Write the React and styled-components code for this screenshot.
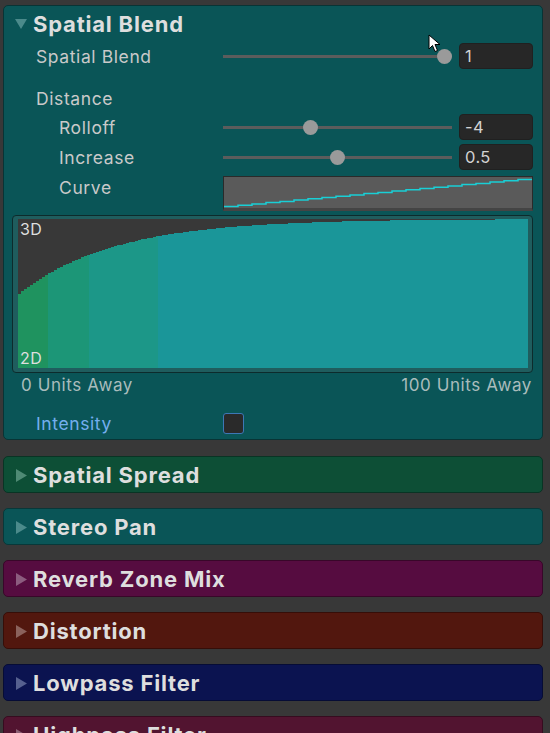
import React from "react";
import styled, { createGlobalStyle } from "styled-components";

const Global = createGlobalStyle`
  html, body { margin: 0; padding: 0; background: #383838; }
  body { font-family: Inter, "Noto Sans", "Liberation Sans", sans-serif; }
  * { box-sizing: border-box; }
`;

const Page = styled.div`
  position: relative;
  width: 550px;
  height: 733px;
  overflow: hidden;
  background: #383838;
  padding: 5px 7px 0 3px;
  display: flex;
  flex-direction: column;
  gap: 15px;
`;

const Foldout = styled.section`
  flex: none;
  background: ${(p) => p.$bg};
  border: 1px solid ${(p) => p.$border};
  border-radius: 5px;
  display: flex;
  flex-direction: column;
  margin-bottom: ${(p) => p.$mb || 0}px;
`;

const Header = styled.div`
  height: 35px;
  display: flex;
  align-items: center;
  padding-left: 11px;
  gap: 6px;
  color: #dedede;
  font-weight: 700;
  font-size: 22px;
  letter-spacing: 0.8px;
`;

const Arrow = styled.span`
  width: 12px;
  height: 13px;
  display: flex;
  align-items: center;
  justify-content: center;
  margin-top: 1px;
  svg { display: block; }
`;

const Body = styled.div`
  display: flex;
  flex-direction: column;
  padding: 1px 9px 4px 8px;
`;

const Row = styled.div`
  display: flex;
  align-items: ${(p) => (p.$top ? "flex-start" : "center")};
  height: ${(p) => p.$h || 26}px;
  margin-top: ${(p) => p.$mt || 0}px;
`;

const Label = styled.div`
  width: 211px;
  padding-left: ${(p) => p.$indent}px;
  flex: none;
  font-size: 17.5px;
  letter-spacing: 0.6px;
  color: ${(p) => (p.$blue ? "#74aeee" : "#c9c9c9")};
  line-height: ${(p) => (p.$top ? "24px" : "normal")};
`;

const SliderWrap = styled.div`
  flex: 1;
  display: flex;
  align-items: center;
  gap: 7px;
  height: 100%;
`;

const Track = styled.div`
  position: relative;
  flex: 1;
  height: 3px;
  background: #5c5c5c;
`;

const Thumb = styled.div`
  position: absolute;
  top: 50%;
  width: 15px;
  height: 15px;
  margin: -7.5px 0 0 -7.5px;
  border-radius: 50%;
  background: #9a9a9a;
`;

const Field = styled.div`
  width: 74px;
  height: 26px;
  flex: none;
  background: #272727;
  border: 1px solid #202020;
  border-radius: 4px;
  display: flex;
  align-items: center;
  padding-left: 5px;
  font-size: 16.5px;
  color: #d2d2d2;
  letter-spacing: 0.4px;
`;

const CurveBox = styled.div`
  flex: 1;
  height: 35px;
  background: #5a5a5a;
  border: 1px solid #2a2a2a;
  border-bottom: 3px solid #444;
  svg { display: block; }
`;

const Graph = styled.div`
  position: relative;
  margin: 4px 0 0 0;
  height: 158px;
  background: #1f5d5e;
  border: 1px solid #0d2b2c;
  border-radius: 4px;
  padding: 3px 5px 4px 5px;
  svg { display: block; }
`;

const GraphTag = styled.span`
  position: absolute;
  left: 7px;
  font-size: 16px;
  color: #dedede;
  letter-spacing: 0.4px;
  ${(p) => (p.$bottom ? "bottom: 4px;" : "top: 3px;")}
`;

const Units = styled.div`
  display: flex;
  justify-content: space-between;
  height: 23px;
  align-items: center;
  padding: 0 1px 0 9px;
  font-size: 17px;
  letter-spacing: 0.6px;
  color: #a9bcbc;
`;

const Check = styled.div`
  width: 21px;
  height: 21px;
  border-radius: 3px;
  background: #2a2a2a;
  border: 1.5px solid #3d77b5;
`;

const Cursor = styled.svg`
  position: absolute;
  left: 428px;
  top: 34px;
`;

const TriDown = ({ c }) => (
  <svg width="12" height="10" viewBox="0 0 12 10"><path d="M0 0 L12 0 L6 10 Z" fill={c} /></svg>
);
const TriRight = ({ c }) => (
  <svg width="11" height="13" viewBox="0 0 11 13"><path d="M0 0 L11 6.5 L0 13 Z" fill={c} /></svg>
);

const Slider = ({ frac, value }) => (
  <SliderWrap>
    <Track>
      <Thumb style={{ left: `calc(8px + (100% - 16px) * ${frac})` }} />
    </Track>
    <Field>{value}</Field>
  </SliderWrap>
);

function curvePath() {
  const W = 510, H = 149;
  let pts = [];
  for (let x = 0; x <= W; x += 3) {
    const y = Math.round(H * 0.5 * Math.exp(-0.0105 * x));
    pts.push(`${x},${y}`);
    pts.push(`${x + 3},${y}`);
  }
  return `M0,0 L0,${Math.round(H * 0.5)} L${pts.join(" L")} L${W},0 Z`;
}

function stepLine() {
  const pts = [];
  const W = 308, steps = 22;
  for (let i = 0; i < steps; i++) {
    const x0 = (i * W) / steps, x1 = ((i + 1) * W) / steps;
    const y = 29.5 - (i * 27) / (steps - 1);
    pts.push(`${x0.toFixed(1)},${y.toFixed(1)} ${x1.toFixed(1)},${y.toFixed(1)}`);
  }
  return pts.join(" ");
}

const collapsed = [
  { title: "Spatial Spread", bg: "#0d4f36", border: "#093424", tri: "#4f8a74" },
  { title: "Stereo Pan", bg: "#0a5557", border: "#083839", tri: "#4b8a8b" },
  { title: "Reverb Zone Mix", bg: "#560c40", border: "#380729", tri: "#8c5c7f" },
  { title: "Distortion", bg: "#52170e", border: "#360e08", tri: "#8b625c" },
  { title: "Lowpass Filter", bg: "#0b1350", border: "#060c35", tri: "#56608f" },
  { title: "Highpass Filter", bg: "#521430", border: "#360c1f", tri: "#8b5f73" },
];

export default function App() {
  return (
    <>
      <Global />
      <Page>
        <Foldout $bg="#0a5557" $border="#083435" $mb={1}>
          <Header>
            <Arrow><TriDown c="#4b8a8b" /></Arrow>
            Spatial Blend
          </Header>
          <Body>
            <Row $mt={1}>
              <Label $indent={24}>Spatial Blend</Label>
              <Slider frac={1} value="1" />
            </Row>
            <Row $mt={16}>
              <Label $indent={24}>Distance</Label>
            </Row>
            <Row $mt={3}>
              <Label $indent={47}>Rolloff</Label>
              <Slider frac={0.375} value="-4" />
            </Row>
            <Row $mt={4}>
              <Label $indent={47}>Increase</Label>
              <Slider frac={0.5} value="0.5" />
            </Row>
            <Row $mt={6} $h={35} $top>
              <Label $indent={47} $top>Curve</Label>
              <CurveBox>
                <svg width="308" height="31" viewBox="0 0 308 31">
                  <polyline points={stepLine()} fill="none" stroke="#19cfd6" strokeWidth="1.5" />
                </svg>
              </CurveBox>
            </Row>
            <Graph>
              <svg width="510" height="149" viewBox="0 0 510 149">
                <rect x="0" y="0" width="30" height="149" fill="#1f935f" />
                <rect x="30" y="0" width="41" height="149" fill="#1c9677" />
                <rect x="71" y="0" width="69" height="149" fill="#1c9788" />
                <rect x="140" y="0" width="370" height="149" fill="#1a9699" />
                <path d={curvePath()} fill="#383838" />
              </svg>
              <GraphTag>3D</GraphTag>
              <GraphTag $bottom>2D</GraphTag>
            </Graph>
            <Units>
              <span>0 Units Away</span>
              <span>100 Units Away</span>
            </Units>
            <Row $mt={16} $h={23}>
              <Label $indent={24} $blue>Intensity</Label>
              <Check />
            </Row>
          </Body>
        </Foldout>
        {collapsed.map((f) => (
          <Foldout key={f.title} $bg={f.bg} $border={f.border}>
            <Header>
              <Arrow><TriRight c={f.tri} /></Arrow>
              {f.title}
            </Header>
          </Foldout>
        ))}
        <Cursor width="14" height="19" viewBox="0 0 14 19">
          <path d="M1 1 L1 15 L4.5 11.5 L7 17.5 L9.5 16.5 L7 10.5 L12 10.5 Z" fill="#fff" stroke="#000" strokeWidth="1" strokeLinejoin="round" />
        </Cursor>
      </Page>
    </>
  );
}
